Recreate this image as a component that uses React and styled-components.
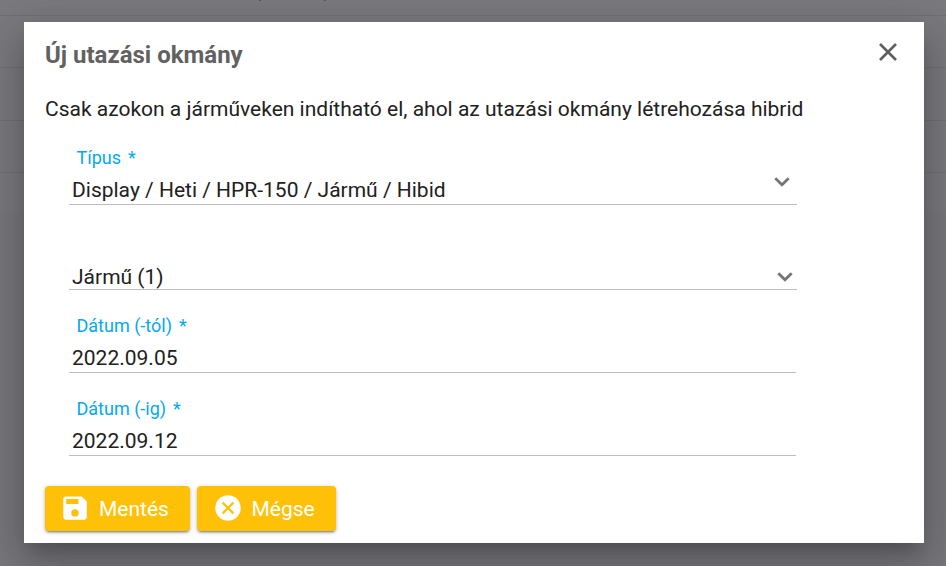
import React from "react";
import styled, { createGlobalStyle } from "styled-components";

const fields = [
   {
      label: "Típus",
      value: "Display / Heti / HPR-150 / Jármű / Hibid",
      select: true,
      height: 65,
      arrow: "17px 7px",
   },
   { value: "Jármű (1)", select: true, height: 85, arrow: "7px 4px" },
   { label: "Dátum (-tól)", value: "2022.09.05", height: 83 },
   { label: "Dátum (-ig)", value: "2022.09.12", height: 83 },
];

const App = () => {
   return (
      <>
         <GlobalStyle />
         <Page>
            <Table>
               <HeadRow>
                  <Speck />
                  <Speck />
               </HeadRow>
               <TableRow />
               <TableRow $tall />
               <TableRow />
               <LastRow />
            </Table>
            <Backdrop>
               <Dialog role="dialog" aria-labelledby="dialog-title">
                  <Header>
                     <Title id="dialog-title">Új utazási okmány</Title>
                     <CloseButton aria-label="Bezárás">
                        <CloseIcon />
                     </CloseButton>
                  </Header>
                  <Message>
                     Csak azokon a járműveken indítható el, ahol az utazási
                     okmány létrehozása hibrid
                  </Message>
                  <Form>
                     {fields.map((field) => (
                        <FormField key={field.value} {...field} />
                     ))}
                  </Form>
                  <Actions>
                     <Button $width={145} $start={18} $gap={12}>
                        <SaveIcon />
                        Mentés
                     </Button>
                     <Button $width={139} $start={17.5} $gap={11}>
                        <CancelIcon />
                        Mégse
                     </Button>
                  </Actions>
               </Dialog>
            </Backdrop>
         </Page>
      </>
   );
};

// Form field Component
const FormField = ({ label, value, select, height, arrow }) => {
   return (
      <Field $height={height} $select={select}>
         {label && (
            <Label>
               {label} <span>*</span>
            </Label>
         )}
         <ValueRow>
            <Value $tight={!label}>{value}</Value>
            {select && (
               <Arrow $offset={arrow}>
                  <ChevronIcon />
               </Arrow>
            )}
         </ValueRow>
      </Field>
   );
};

// Icons
const CloseIcon = () => (
   <svg width="18" height="18" viewBox="0 0 18 18">
      <path
         d="M1 1L17 17M17 1L1 17"
         stroke="#5f5f5f"
         strokeWidth="2.6"
         fill="none"
      />
   </svg>
);

const ChevronIcon = () => (
   <svg width="16" height="10" viewBox="0 0 16 10">
      <path
         d="M1.3 1.3L8 7.8L14.7 1.3"
         stroke="#757575"
         strokeWidth="2.7"
         fill="none"
      />
   </svg>
);

const SaveIcon = () => (
   <svg width="24" height="24" viewBox="0 0 24 24" fill="#fff">
      <path
         fillRule="evenodd"
         d="M2.5 .6H18.8L23.8 5.6V21.3Q23.8 23.7 21.4 23.7H2.7Q.3 23.7 .3 21.3V2.8Q.3 .6 2.5 .6ZM3.2 3.1V8H15.5V3.1ZM12 13.2a3.7 3.7 0 1 0 0 7.4a3.7 3.7 0 1 0 0-7.4Z"
      />
   </svg>
);

const CancelIcon = () => (
   <svg width="26" height="26" viewBox="0 0 26 26">
      <circle cx="13" cy="13" r="12.7" fill="#fff" />
      <path
         d="M7.6 7.6L18.4 18.4M18.4 7.6L7.6 18.4"
         stroke="#ffc107"
         strokeWidth="2.2"
         fill="none"
      />
   </svg>
);

const GlobalStyle = createGlobalStyle`
   * {
      box-sizing: border-box;
   }
   body {
      margin: 0;
      overflow: hidden;
      font-family: Roboto, "Liberation Sans", sans-serif;
      color: #212121;
   }
   button {
      font-family: inherit;
      border: none;
      cursor: pointer;
   }
`;

const Page = styled.div`
   position: relative;
   width: 946px;
   height: 566px;
   overflow: hidden;
   background: #78777c;
`;

const Table = styled.div`
   background: #7a797e;
`;

const HeadRow = styled.div`
   display: flex;
   gap: 63px;
   height: 16px;
   padding-left: 259px;
   border-bottom: 1px solid #707073;
`;

const Speck = styled.i`
   width: 2px;
   height: 1px;
   background: #55555a;
`;

const TableRow = styled.div`
   height: ${({ $tall }) => ($tall ? 53 : 52)}px;
   border-bottom: 1px solid #707073;
`;

const LastRow = styled.div`
   height: 39px;
`;

const Backdrop = styled.div`
   position: absolute;
   inset: 0;
   display: flex;
   align-items: flex-start;
   justify-content: center;
   padding-top: 22px;
`;

const Dialog = styled.section`
   display: flex;
   flex-direction: column;
   width: 900px;
   height: 521px;
   margin-right: -2px;
   padding: 0 21px;
   background: #fff;
   box-shadow: 0 11px 15px -7px rgba(0, 0, 0, 0.2),
      0 24px 38px 3px rgba(0, 0, 0, 0.14), 0 9px 46px 8px rgba(0, 0, 0, 0.12);
`;

const Header = styled.header`
   display: flex;
   justify-content: space-between;
   height: 66px;
   padding: 17px 6px 0 0;
`;

const Title = styled.h1`
   margin: 0;
   font-size: 24px;
   font-weight: 700;
   line-height: 32px;
   color: #616161;
`;

const CloseButton = styled.button`
   display: flex;
   height: 26px;
   padding: 4px 0;
   background: none;
`;

const Message = styled.p`
   height: 52px;
   margin: 0;
   font-size: 21px;
   line-height: 42px;
   white-space: nowrap;
`;

const Form = styled.form`
   display: flex;
   flex-direction: column;
   padding-left: 24px;
`;

const Field = styled.div`
   display: flex;
   flex-direction: column;
   justify-content: flex-end;
   width: ${({ $select }) => ($select ? 728 : 727)}px;
   height: ${({ $height }) => $height}px;
   border-bottom: 1px solid #bdbdbd;
`;

const Label = styled.label`
   padding-left: 7.5px;
   font-size: 18px;
   line-height: 24px;
   color: #03a9f4;
   span {
      margin-left: 2.5px;
   }
`;

const ValueRow = styled.div`
   display: flex;
   align-items: flex-end;
   justify-content: space-between;
`;

const Value = styled.span`
   padding: ${({ $tight }) => ($tight ? "6px 0 0 3px" : "7px 0 1px 3px")};
   font-size: 21px;
   line-height: ${({ $tight }) => ($tight ? 24 : 26)}px;
`;

const Arrow = styled.span`
   display: flex;
   padding: 0 ${({ $offset }) => $offset.split(" ")[1]}
      ${({ $offset }) => $offset.split(" ")[0]} 0;
`;

const Actions = styled.footer`
   display: flex;
   gap: 7px;
   margin-top: 30px;
`;

const Button = styled.button`
   display: flex;
   align-items: center;
   gap: ${({ $gap }) => $gap}px;
   width: ${({ $width }) => $width}px;
   height: 45px;
   padding: 0 0 0 ${({ $start }) => $start}px;
   border-radius: 4px;
   background: #ffc107;
   box-shadow: 0 3px 1px -2px rgba(0, 0, 0, 0.2),
      0 2px 2px 0 rgba(0, 0, 0, 0.18), 0 1px 5px 0 rgba(0, 0, 0, 0.2);
   color: #fff;
   font-size: 21px;
   svg {
      margin-top: -1px;
   }
`;

export default App;
